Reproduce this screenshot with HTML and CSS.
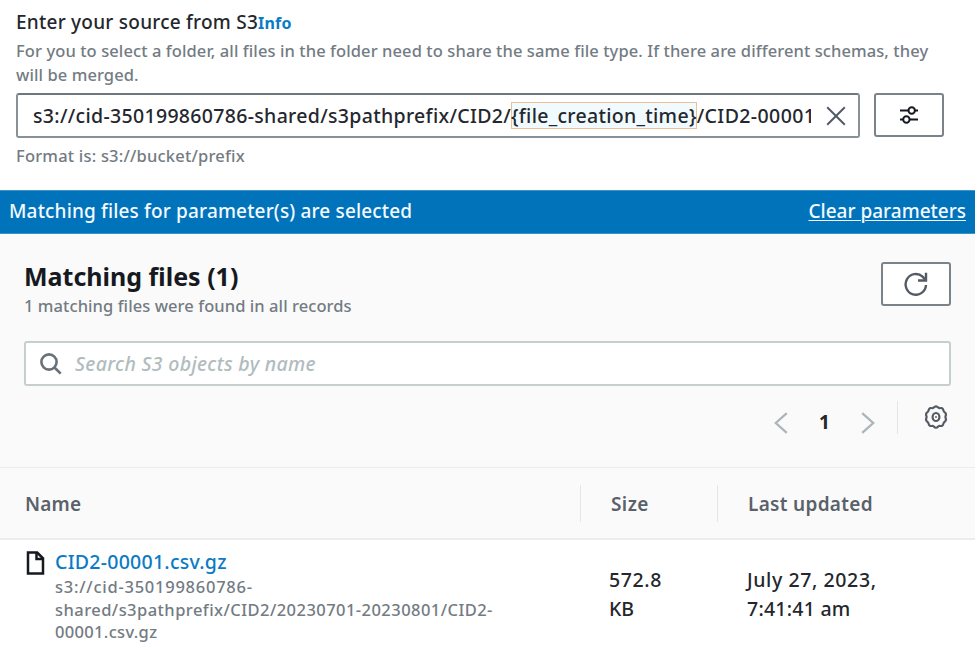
FILE: index.html
```html
<!DOCTYPE html>
<html lang="en">
<head>
<meta charset="utf-8">
<title>S3 source</title>
<link rel="stylesheet" href="styles.css">
</head>
<body>
<main class="page">
  <section class="source">
    <div class="source-title"><span class="label">Enter your source from S3</span><a class="info">Info</a></div>
    <p class="description"><span class="line one">For you to select a folder, all files in the folder need to share the same file type. If there are different schemas, they</span> <span class="line two">will be merged.</span></p>
    <div class="source-row">
      <div class="source-input">
        <div class="source-value"><span class="path">s3://cid-350199860786-shared/s3pathprefix/CID2/</span><span class="token">{file_creation_time}</span><span class="tail">/CID2-00001</span></div>
        <svg class="close" viewBox="0 0 20 20"><path d="M1.2 1.2 18.8 18.8M18.8 1.2 1.2 18.8"/></svg>
      </div>
      <button class="button settings" aria-label="Parameters">
        <svg class="sliders" viewBox="0 0 20 20"><path d="M1 5.5h8M16 5.5h3M1 14.5h3M11 14.5h8"/><circle cx="12.7" cy="5.5" r="3.2"/><circle cx="7.4" cy="14.5" r="3.2"/></svg>
      </button>
    </div>
    <p class="hint">Format is: s3://bucket/prefix</p>
  </section>
  <section class="banner"><span class="banner-text">Matching files for parameter(s) are selected</span><a class="banner-link">Clear parameters</a></section>
  <section class="files">
    <header class="files-header">
      <div>
        <h2>Matching files (1)</h2>
        <p class="count">1 matching files were found in all records</p>
      </div>
      <button class="button refresh-button" aria-label="Refresh">
        <svg class="refresh" viewBox="0 0 24 24"><path d="M22 13A10.2 10.4 0 1 1 18.6 4.6L21 7.4"/><path d="M22 .8v7.7h-8"/></svg>
      </button>
    </header>
    <div class="search">
      <svg class="magnifier" viewBox="0 0 22 22"><circle cx="9" cy="9" r="7.6"/><path d="m14.5 14.5 6.2 6.2"/></svg>
      <span class="placeholder">Search S3 objects by name</span>
    </div>
    <nav class="pager">
      <svg class="chevron" viewBox="0 0 14 22"><path d="M12.8 1.2 1.8 11l11 9.8"/></svg>
      <span class="current">1</span>
      <svg class="chevron" viewBox="0 0 14 22"><path d="m1.2 1.2 11 9.8-11 9.8"/></svg>
      <i class="separator"></i>
      <svg class="gear" viewBox="0 0 24 24"><path d="M9.7 2.6Q12 .2 14.3 2.6L15.4 3.2Q18.9 2.3 19.4 5.4L20 6.6Q23 8.6 21.5 11.2V12.8Q23 15.4 20 17.4L19.4 18.6Q18.9 21.7 15.4 20.8L14.3 21.4Q12 23.8 9.7 21.4L8.6 20.8Q5.1 21.7 4.6 18.6L4 17.4Q1 15.4 2.5 12.8V11.2Q1 8.6 4 6.6L4.6 5.4Q5.1 2.3 8.6 3.2Z"/><ellipse cx="12" cy="12" rx="3.4" ry="4"/><circle class="dot" cx="12" cy="12" r=".6"/></svg>
    </nav>
  </section>
  <section class="table">
    <div class="row head">
      <div class="cell"><span class="th-name">Name</span></div>
      <div class="cell divided"><span class="th-size">Size</span></div>
      <div class="cell divided"><span class="th-date">Last updated</span></div>
    </div>
    <div class="row body">
      <div class="cell object">
        <svg class="file" viewBox="0 0 18 24"><path d="M1.5 1.5h9.2l5.8 5.8v15.2h-15z"/><path d="M10 1.5V8h6.5"/></svg>
        <div>
          <a class="name">CID2-00001.csv.gz</a>
          <p class="key"><span class="line k1">s3://cid-350199860786-</span><span class="line k2">shared/s3pathprefix/CID2/20230701-20230801/CID2-</span><span class="line k3">00001.csv.gz</span></p>
        </div>
      </div>
      <div class="cell value"><span class="line v1">572.8</span><span class="line v2">KB</span></div>
      <div class="cell value date"><span class="line v3">July 27, 2023,</span><span class="line v4">7:41:41 am</span></div>
    </div>
  </section>
</main>
</body>
</html>
```
FILE: styles.css
```css
* { box-sizing: border-box; }
body { margin: 0; background: #fff; font-family: "Noto Sans", sans-serif; color: #24272d; overflow: hidden; }
p, h2 { margin: 0; }
svg { display: block; fill: none; stroke: #545b64; stroke-width: 2; flex: none; }
.page { width: 975px; height: 650px; overflow: hidden; }
.line { display: block; white-space: nowrap; }
.source { height: 190px; padding: 9px 0 0 16px; }
.source-title { display: flex; align-items: baseline; height: 30px; line-height: 27px; font-size: 19px; }
.label { font-weight: 500; letter-spacing: .24px; }
.info { font-size: 16px; font-weight: 700; color: #0a7bc4; letter-spacing: .2px; }
.description { font-size: 16.5px; font-weight: 500; letter-spacing: .09px; line-height: 24px; color: #737b83; height: 54px; }
.source-row { display: flex; gap: 14px; }
.source-input { width: 844px; height: 45px; border: 2px solid #879196; border-top-color: #6f777e; border-radius: 3px; display: flex; align-items: center; justify-content: space-between; padding: 0 12px 0 15px; }
.source-value { width: 778px; overflow: hidden; white-space: nowrap; font-size: 19.5px; font-weight: 500; line-height: 27px; margin-top: -1px; }
.path { letter-spacing: .32px; }
.token { background: #f1faff; box-shadow: inset 0 0 0 1px #eebf90; letter-spacing: .3px; }
.tail { letter-spacing: .4px; }
.close { width: 20px; height: 20px; }
.button { width: 70px; height: 44px; padding: 0; background: #fff; border: 2px solid #7b838a; border-radius: 3px; display: grid; place-items: center; }
.sliders { width: 20px; height: 20px; stroke: #16191f; }
.refresh { width: 24px; height: 24px; stroke-width: 2.4; }
.hint { font-size: 16.5px; font-weight: 500; letter-spacing: .2px; line-height: 24px; color: #737b83; margin-top: 6px; }
.banner { height: 44px; background: #0073bb; color: #f4faff; display: flex; justify-content: space-between; padding: 7px 9px 0 9px; font-size: 19px; line-height: 27px; border-top: 1px solid #3b93ca; border-bottom: 1px solid #3b93ca; }
.banner-text, .banner-link { font-weight: 500; }
.banner-text { letter-spacing: .16px; }
.banner-link { text-decoration: underline; text-decoration-thickness: 1px; text-underline-offset: 2px; }
.files { height: 234px; background: #fafafa; padding: 28px 24px 0; border-bottom: 1px solid #eaeded; }
.files-header { display: flex; justify-content: space-between; height: 79px; }
h2 { font-size: 25px; line-height: 28px; font-weight: 700; color: #16191f; }
.count { font-size: 16.5px; font-weight: 500; line-height: 24px; color: #737b83; margin-top: 4px; letter-spacing: .07px; }
.search { height: 45px; border: 2px solid #c5cfcf; border-radius: 3px; background: #fff; display: flex; align-items: center; gap: 13px; padding-left: 14px; }
.magnifier { width: 22px; height: 22px; stroke: #687078; stroke-width: 2.6; }
.placeholder { font-size: 19.5px; font-weight: 500; font-style: italic; color: #b0bcbd; letter-spacing: .32px; }
.pager { display: flex; align-items: center; height: 73px; padding-left: 750px; }
.chevron { width: 14px; height: 22px; stroke: #aab7b8; stroke-width: 2.3; }
.current { width: 73px; text-align: center; font-size: 19px; font-weight: 700; margin-top: -1px; }
.separator { width: 1px; height: 33px; background: #e1e6e6; margin: -11px 26px 0 22px; }
.gear { width: 24px; height: 24px; margin-top: -11px; stroke-width: 2.2; }
.gear .dot { stroke-width: 1; }
.row { display: grid; grid-template-columns: 580px 137px 258px; }
.head { height: 72px; align-items: center; background: #fafafa; border-bottom: 2px solid #eaeded; font-size: 19px; font-weight: 650; color: #5a616a; }
.head .cell { padding: 1px 0 0 25px; }
.head .divided { height: 37px; line-height: 37px; padding-left: 30px; border-left: 1px solid #e1e6e6; }
.th-name { letter-spacing: .2px; }
.th-size { letter-spacing: .4px; }
.th-date { letter-spacing: .3px; }
.object { display: flex; gap: 10px; padding: 9px 0 0 26px; }
.file { width: 19px; height: 24px; margin-top: 2px; stroke: #16191f; stroke-width: 2.5; }
.name { display: block; font-size: 19.5px; font-weight: 500; line-height: 25px; color: #0a7bc4; letter-spacing: .26px; }
.key { font-size: 16.5px; font-weight: 500; line-height: 22.5px; color: #737b83; margin-top: 2px; }
.k1 { letter-spacing: .75px; }
.k2 { letter-spacing: .45px; }
.k3 { letter-spacing: .33px; }
.value { padding: 25px 0 0 29px; font-size: 19.5px; font-weight: 500; line-height: 29px; }
.date { padding-left: 30px; }
.v1 { letter-spacing: .6px; }
.v3 { letter-spacing: .6px; }
.v4 { letter-spacing: .25px; }
```
